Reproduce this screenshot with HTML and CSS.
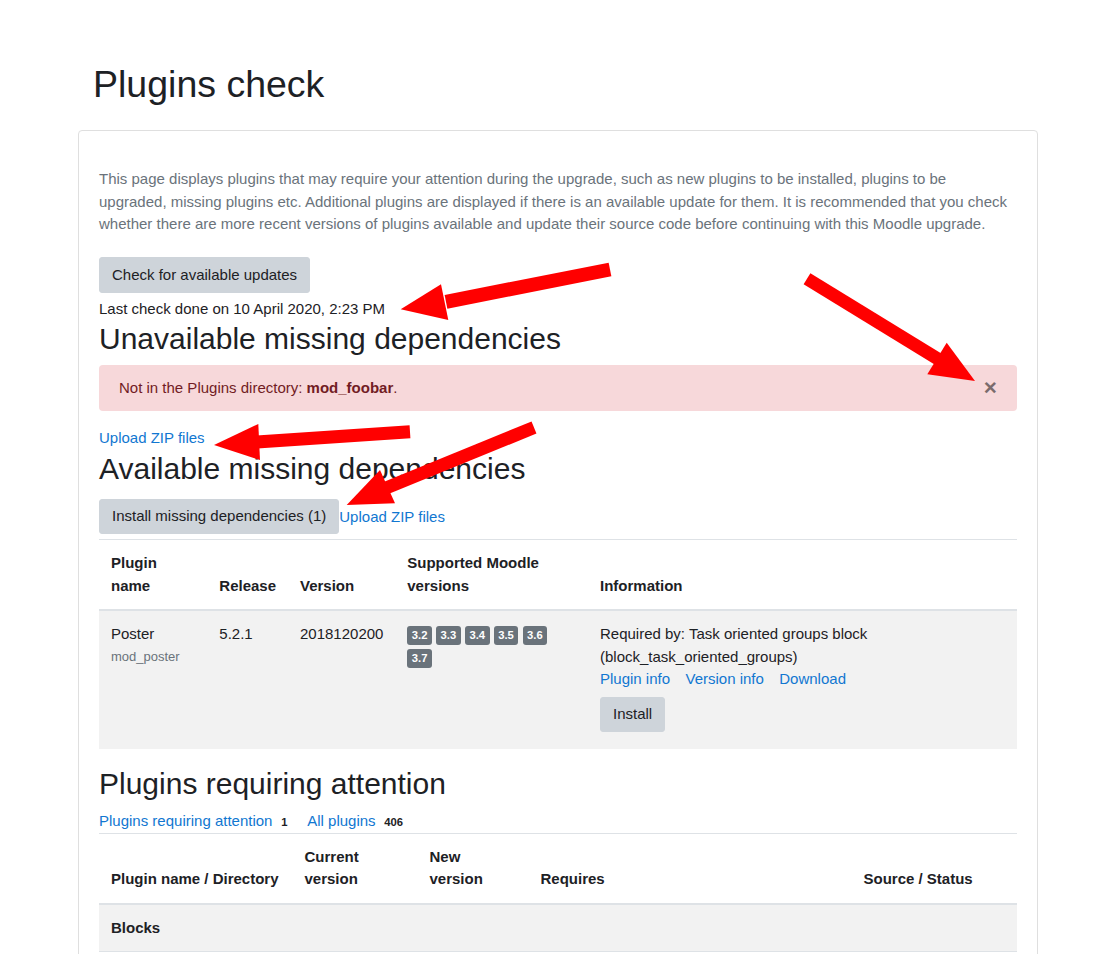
FILE: index.html
```html
<!DOCTYPE html>
<html lang="en">
<head>
    <meta charset="UTF-8">
    <meta name="viewport" content="width=device-width, initial-scale=1.0">
    <title>Plugins check</title>
    <link rel="stylesheet" href="styles.css">
</head>
<body>
    <div class="page">
        <h1 class="page-title">Plugins check</h1>

        <div class="card">
            <div class="card-body">
                <p class="intro">This page displays plugins that may require your attention during the upgrade, such as new plugins to be installed, plugins to be upgraded, missing plugins etc. Additional plugins are displayed if there is an available update for them. It is recommended that you check whether there are more recent versions of plugins available and update their source code before continuing with this Moodle upgrade.</p>

                <div class="btn-row"><button class="btn">Check for available updates</button></div>
                <div class="last-check">Last check done on 10 April 2020, 2:23 PM</div>

                <h2>Unavailable missing dependencies</h2>
                <div class="alert">
                    <span>Not in the Plugins directory: <strong>mod_foobar</strong>.</span>
                    <button class="close">&times;</button>
                </div>
                <a href="#">Upload ZIP files</a>

                <h2>Available missing dependencies</h2>
                <div class="btn-row actions"><button class="btn">Install missing dependencies (1)</button><a href="#">Upload ZIP files</a></div>

                <table class="table deps">
                    <thead>
                        <tr>
                            <th class="c-name">Plugin name</th>
                            <th class="c-release">Release</th>
                            <th class="c-version">Version</th>
                            <th class="c-supported">Supported Moodle versions</th>
                            <th>Information</th>
                        </tr>
                    </thead>
                    <tbody>
                        <tr class="striped">
                            <td>Poster<div class="component">mod_poster</div></td>
                            <td>5.2.1</td>
                            <td>2018120200</td>
                            <td>
                                <div class="versions">
                                    <span class="badge">3.2</span> <span class="badge">3.3</span> <span class="badge">3.4</span> <span class="badge">3.5</span> <span class="badge">3.6</span> <span class="badge">3.7</span>
                                </div>
                            </td>
                            <td>
                                Required by: Task oriented groups block (block_task_oriented_groups)
                                <div class="info-links">
                                    <a href="#">Plugin info</a> <a href="#">Version info</a> <a href="#">Download</a>
                                </div>
                                <button class="btn install">Install</button>
                            </td>
                        </tr>
                    </tbody>
                </table>

                <h2>Plugins requiring attention</h2>
                <div class="filter">
                    <span class="filter-item"><a href="#">Plugins requiring attention</a> <span class="count">1</span></span>
                    <span class="filter-item"><a href="#">All plugins</a> <span class="count">406</span></span>
                </div>

                <table class="table plugins">
                    <thead>
                        <tr>
                            <th class="p-name">Plugin name / Directory</th>
                            <th class="p-current">Current version</th>
                            <th class="p-new">New version</th>
                            <th class="p-requires">Requires</th>
                            <th>Source / Status</th>
                        </tr>
                    </thead>
                    <tbody>
                        <tr class="striped type-row">
                            <th colspan="5">Blocks</th>
                        </tr>
                    </tbody>
                </table>
            </div>
        </div>
    </div>

    <!-- red annotation arrows drawn over the screenshot -->
    <svg class="annotations" width="1114" height="954" viewBox="0 0 1114 954">
        <g fill="#ff0000" stroke="#ff0000">
            <line x1="610" y1="269.5" x2="446" y2="301.8" stroke-width="14"/>
            <polygon points="400.7,309.3 441,284.3 448.3,320" stroke="none"/>

            <line x1="807" y1="278.7" x2="938" y2="359" stroke-width="13"/>
            <polygon points="975,381 946.7,342.7 927.3,374.3" stroke="none"/>

            <line x1="410" y1="431.7" x2="257" y2="442" stroke-width="13"/>
            <polygon points="214,445 258.3,424 260,460" stroke="none"/>

            <line x1="534" y1="427.5" x2="386" y2="488" stroke-width="13"/>
            <polygon points="346.7,505 380,470 395,503.3" stroke="none"/>
        </g>
    </svg>
</body>
</html>
```

FILE: styles.css
```css
body {
    margin: 0;
    font-family: "Liberation Sans", Arial, sans-serif;
    font-size: 15px;
    line-height: 1.5;
    color: #1d2125;
    background: #fff;
}

a {
    color: #1177d1;
    text-decoration: none;
}

.page {
    padding-left: 78px;
    width: 960px;
}

.page-title {
    font-size: 37.5px;
    font-weight: 400;
    line-height: 1.2;
    margin: 62px 0 23px 15px;
}

.card {
    border: 1px solid #dfdfdf;
    border-radius: 4px;
    min-height: 900px;
}

.card-body {
    padding: 20px;
}

.intro {
    color: #6a737b;
    margin: 17px 0 21.5px;
}

.btn {
    font-family: inherit;
    font-size: 15px;
    line-height: 1.5;
    color: #1d2125;
    background: #ced4da;
    border: 1px solid #ced4da;
    border-radius: 3px;
    padding: 5.5px 12px;
    cursor: pointer;
}

.last-check {
    margin-top: 5px;
}

h2 {
    font-size: 30px;
    font-weight: 400;
    line-height: 1.2;
    margin: 1px 0 8px;
}

.alert {
    display: flex;
    align-items: center;
    justify-content: space-between;
    background: #f7d8da;
    color: #721c24;
    border-radius: 4px;
    padding: 12px 20px 11.5px;
    margin-bottom: 16px;
}

.close {
    font-family: inherit;
    font-size: 22.5px;
    font-weight: 700;
    line-height: 1;
    background: none;
    border: 0;
    padding: 0;
    color: #000;
    opacity: .5;
}

.actions {
    margin: 12px 0 5px;
}

.table {
    width: 100%;
    border-collapse: collapse;
    table-layout: fixed;
    margin-bottom: 17px;
}

.table th,
.table td {
    padding: 12px;
    text-align: left;
    vertical-align: top;
    border-top: 1px solid #dee2e6;
}

.table thead th {
    vertical-align: bottom;
    border-bottom: 2px solid #dee2e6;
    font-weight: 700;
}

.striped {
    background: #f2f2f2;
}

/* cell widths are content widths, padding comes on top */
.c-name { width: 84.3px; }
.c-release { width: 56.7px; }
.c-version { width: 83.3px; }
.c-supported { width: 168.7px; }

.component {
    font-size: 13px;
    color: #6a737b;
    line-height: 22px;
}

.versions {
    max-width: 160px;
}

.badge {
    display: inline-block;
    background: #6a737b;
    color: #fff;
    font-size: 11.25px;
    font-weight: 700;
    line-height: 1;
    padding: 4px 4.5px;
    border-radius: 3px;
}

.info-links a {
    margin-right: 11.25px;
}

.install {
    margin: 6px 0 5px;
}

.filter-item {
    margin-right: 12px;
}

.count {
    display: inline-block;
    font-size: 11.25px;
    font-weight: 700;
    line-height: 1;
    padding: 4px 4.5px;
}

.p-name { width: 169.5px; }
.p-current { width: 101px; }
.p-new { width: 87px; }
.p-requires { width: 299px; }

.type-row th {
    font-weight: 700;
    border-bottom: 1px solid #dee2e6;
}

.annotations {
    position: absolute;
    top: 0;
    left: 0;
    pointer-events: none;
}
```
